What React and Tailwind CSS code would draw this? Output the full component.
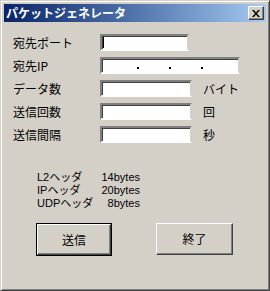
import React from 'react';

const font = { fontFamily: '"Noto Sans CJK JP", "Liberation Sans", sans-serif' };
const listFont = { fontFamily: '"Liberation Sans", "Noto Sans CJK JP", sans-serif' };

function Field({ w, caret, children }) {
  return (
    <div
      className={`relative h-[17px] bg-white border-2 border-t-[#808080] border-l-[#808080] border-b-white border-r-[#d4d0c8] shadow-[inset_1px_1px_0_#404040] ${w}`}
    >
      {caret && <div className="absolute left-[1px] top-[1px] w-[1px] h-[11px] bg-black" />}
      {children}
    </div>
  );
}

function Row({ label, w, caret, unit, children }) {
  return (
    <div className="flex items-center h-[23px]">
      <span className="w-[87px] text-[12px] leading-none text-black">{label}</span>
      <Field w={w} caret={caret}>{children}</Field>
      {unit && <span className="ml-[11px] text-[12px] leading-none text-black">{unit}</span>}
    </div>
  );
}

const headers = [
  ['L2ヘッダ', '14bytes'],
  ['IPヘッダ', '20bytes'],
  ['UDPヘッダ', '8bytes'],
];

export default function App() {
  return (
    <div
      className="w-[270px] h-[291px] bg-[#d4d0c8] flex flex-col border border-t-[#d4d0c8] border-l-[#d4d0c8] border-b-[#404040] border-r-[#404040] shadow-[inset_1px_1px_0_#fff,inset_-1px_-1px_0_#808080]"
      style={font}
    >
      <div className="mx-[3px] mt-[3px] h-[18px] flex items-center justify-between bg-gradient-to-r from-[#0a246a] to-[#a6caf0] px-[2px]">
        <span className="text-white text-[12px] font-bold leading-none">パケットジェネレータ</span>
        <div className="w-[16px] h-[14px] bg-[#d4d0c8] flex items-center justify-center border border-t-white border-l-white border-b-[#404040] border-r-[#404040] shadow-[inset_-1px_-1px_0_#808080]">
          <svg width="8" height="7" viewBox="0 0 8 7">
            <path d="M0 0h2l2 2.5L6 0h2L5 3.5 8 7H6L4 4.5 2 7H0l3-3.5z" fill="#000" />
          </svg>
        </div>
      </div>

      <div className="pl-[12px] pt-[9px] flex flex-col">
        <Row label="宛先ポート" w="w-[89px]" caret />
        <Row label="宛先IP" w="w-[140px]">
          <div className="flex justify-between px-[35px] pt-[8px]">
            <span className="w-[2px] h-[2px] bg-black" />
            <span className="w-[2px] h-[2px] bg-black" />
            <span className="w-[2px] h-[2px] bg-black" />
          </div>
        </Row>
        <Row label="データ数" w="w-[92px]" unit="バイト" />
        <Row label="送信回数" w="w-[92px]" unit="回" />
        <Row label="送信間隔" w="w-[92px]" unit="秒" />
      </div>

      <div className="pl-[36px] pt-[25px] flex flex-col text-[11px] leading-[13px] text-black" style={listFont}>
        {headers.map(([k, v]) => (
          <div key={k} className="flex h-[13px]">
            <span className="w-[62px]">{k}</span>
            <span className="w-[41px] text-right">{v}</span>
          </div>
        ))}
      </div>

      <div className="flex pl-[35px] pt-[13px] gap-[44px] items-start">
        <div className="border border-black">
          <div className="w-[74px] h-[31px] flex items-center justify-center text-[12px] text-black border border-t-white border-l-white border-b-[#404040] border-r-[#404040] shadow-[inset_-1px_-1px_0_#808080]">
            送信
          </div>
        </div>
        <div className="w-[77px] h-[32px] flex items-center justify-center text-[12px] text-black border border-t-white border-l-white border-b-[#404040] border-r-[#404040] shadow-[inset_-1px_-1px_0_#808080]">
          終了
        </div>
      </div>
    </div>
  );
}
